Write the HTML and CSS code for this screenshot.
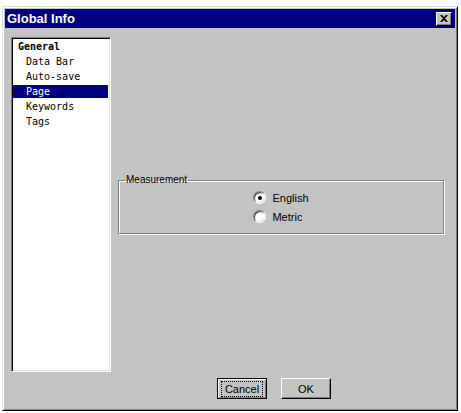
FILE: index.html
```html
<!DOCTYPE html>
<html>
<head>
  <meta charset="UTF-8">
  <link rel="stylesheet" href="styles.css">
</head>
<body>
  <div class="window">
    <div class="title-bar">
      <div class="title">Global Info</div>
      <button class="close-button">
        <svg width="8" height="7" viewBox="0 0 8 7">
          <path d="M0 0h2l2 2 2-2h2L5 3.5 8 7H6L4 5 2 7H0l3-3.5z" fill="#000"/>
        </svg>
      </button>
    </div>

    <div class="content">
      <div class="list-box">
        <div class="list-item group">General</div>
        <div class="list-item">Data Bar</div>
        <div class="list-item">Auto-save</div>
        <div class="list-item selected">Page</div>
        <div class="list-item">Keywords</div>
        <div class="list-item">Tags</div>
      </div>

      <div class="pane">
        <fieldset class="group-box">
          <legend>Measurement</legend>
          <div class="options">
            <div class="option"><span class="radio checked"></span>English</div>
            <div class="option"><span class="radio"></span>Metric</div>
          </div>
        </fieldset>
      </div>
    </div>

    <div class="footer">
      <button class="button default"><span class="focus">Cancel</span></button>
      <button class="button">OK</button>
    </div>
  </div>
</body>
</html>
```

FILE: styles.css
```css
body {
  margin: 0;
  background: #fff;
  font-family: "Liberation Sans", Arial, sans-serif;
  overflow: hidden;
}

.window {
  margin: 6px 0 0 2px;
  width: 456px;
  height: 405px;
  box-sizing: border-box;
  padding: 2px;
  background: #c3c3c3;
  border: 1px solid;
  border-color: #dfdfdf #000 #000 #dfdfdf;
  box-shadow: inset 1px 1px 0 #fff, inset -1px -1px 0 #808080;
  display: flex;
  flex-direction: column;
}

.title-bar {
  height: 19px;
  background: #000080;
  display: flex;
  justify-content: space-between;
  align-items: center;
  padding: 0 3px 0 2px;
}

.title {
  color: #fff;
  font-size: 13px;
  font-weight: bold;
}

.close-button {
  width: 16px;
  height: 14px;
  padding: 0;
  background: #c3c3c3;
  border: 1px solid;
  border-color: #fff #000 #000 #fff;
  box-shadow: inset -1px -1px 0 #808080;
  display: flex;
  align-items: center;
  justify-content: center;
}

.content {
  display: flex;
  margin-top: 9px;
  padding-left: 6px;
}

.list-box {
  width: 100px;
  height: 335px;
  box-sizing: border-box;
  background: #fff;
  border: 1px solid;
  border-color: #808080 #fff #fff #808080;
  box-shadow: inset 1px 1px 0 #000, inset -1px -1px 0 #dfdfdf;
  padding: 2px 2px 0 1px;
  font-family: "DejaVu Sans Mono", monospace;
  font-size: 10px;
}

.list-item {
  height: 13px;
  line-height: 13px;
  margin-bottom: 2px;
  padding-left: 13px;
  color: #000;
  white-space: nowrap;
}

.list-item.group {
  padding-left: 5px;
  font-weight: bold;
}

.list-item.selected {
  background: #000080;
  color: #fff;
}

.pane {
  flex: 1;
  padding-top: 137px;
}

.group-box {
  margin: 0 11px 0 7px;
  padding: 2px 6px 7px 6px;
  border: 1px solid #808080;
  box-shadow: inset 1px 1px 0 #fff, 1px 1px 0 #fff;
}

.group-box legend {
  padding: 0 1px;
  font-size: 10px;
  line-height: 12px;
  color: #000;
}

.options {
  width: max-content;
  margin: 0 auto;
  display: flex;
  flex-direction: column;
}

.option {
  height: 19px;
  display: flex;
  align-items: center;
  gap: 6px;
  font-size: 11px;
  color: #000;
}

.radio {
  width: 11px;
  height: 11px;
  border-radius: 50%;
  background: #fff;
  border: 1px solid;
  border-color: #808080 #fff #fff #808080;
  box-shadow: inset 1px 1px 0 #404040, inset -1px -1px 0 #dfdfdf;
  display: flex;
  align-items: center;
  justify-content: center;
}

.radio.checked::after {
  content: "";
  width: 4px;
  height: 4px;
  border-radius: 50%;
  background: #000;
}

.footer {
  display: flex;
  gap: 14px;
  margin-top: 6px;
  padding-left: 212px;
}

.button {
  width: 50px;
  height: 21px;
  padding: 0;
  background: #c3c3c3;
  border: 1px solid;
  border-color: #fff #000 #000 #fff;
  box-shadow: inset -1px -1px 0 #808080;
  font-family: "Liberation Sans", Arial, sans-serif;
  font-size: 11px;
  color: #000;
}

.button.default {
  border-color: #000;
  box-shadow: inset 1px 1px 0 #fff, inset -1px -1px 0 #808080;
}

.button .focus {
  display: inline-block;
  padding: 1px 3px;
  border: 1px dotted #000;
  line-height: 12px;
}
```
